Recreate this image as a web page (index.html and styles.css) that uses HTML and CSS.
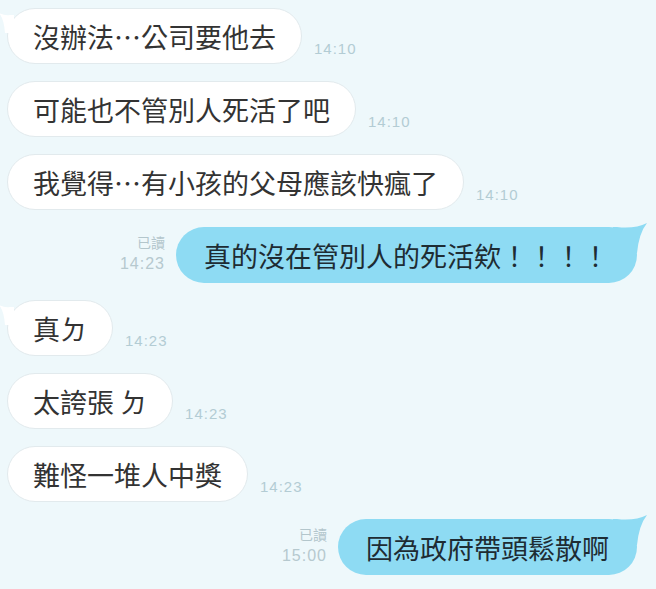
FILE: index.html
```html
<!DOCTYPE html>
<html lang="zh-Hant">
<head>
    <meta charset="UTF-8">
    <meta name="viewport" content="width=device-width, initial-scale=1.0">
    <title>聊天</title>
    <link rel="stylesheet" href="styles.css">
</head>
<body>
    <div class="chat">
        <div class="row left">
            <div class="bubble first">
                <svg class="tail" viewBox="0 0 14 22"><path d="M14,4 L10,4 Q5,5 -1,2 Q4,8 5,22 L14,22 Z" /></svg>
                沒辦法⋯公司要他去
            </div>
            <span class="time">14:10</span>
        </div>
        <div class="row left">
            <div class="bubble">可能也不管別人死活了吧</div>
            <span class="time">14:10</span>
        </div>
        <div class="row left">
            <div class="bubble">我覺得⋯有小孩的父母應該快瘋了</div>
            <span class="time">14:10</span>
        </div>
        <div class="row right">
            <div class="meta">
                <span>已讀</span>
                <span class="time">14:23</span>
            </div>
            <div class="bubble">
                真的沒在管別人的死活欸！！！！
                <svg class="tail" viewBox="0 0 36 30"><path d="M0,4 L4,4 Q22,6 34,0 Q26,10 24,30 L0,30 Z" /></svg>
            </div>
        </div>
        <div class="row left">
            <div class="bubble first">
                <svg class="tail" viewBox="0 0 14 22"><path d="M14,4 L10,4 Q5,5 -1,2 Q4,8 5,22 L14,22 Z" /></svg>
                真ㄉ
            </div>
            <span class="time">14:23</span>
        </div>
        <div class="row left">
            <div class="bubble">太誇張 ㄉ</div>
            <span class="time">14:23</span>
        </div>
        <div class="row left">
            <div class="bubble">難怪一堆人中獎</div>
            <span class="time">14:23</span>
        </div>
        <div class="row right">
            <div class="meta">
                <span>已讀</span>
                <span class="time">15:00</span>
            </div>
            <div class="bubble">
                因為政府帶頭鬆散啊
                <svg class="tail" viewBox="0 0 36 30"><path d="M0,4 L4,4 Q22,6 34,0 Q26,10 24,30 L0,30 Z" /></svg>
            </div>
        </div>
    </div>
</body>
</html>
```

FILE: styles.css
```css
body {
    margin: 0;
    background-color: #eef8fb;
    font-family: "Noto Sans CJK TC", "Noto Sans", sans-serif;
    color: #333;
}
.chat {
    display: flex;
    flex-direction: column;
    gap: 17px;
    padding: 8px 19px 0 7px;
}
.row {
    display: flex;
    align-items: flex-end;
    gap: 12px;
}
.row.right {
    justify-content: flex-end;
    gap: 11px;
}
.bubble {
    position: relative;
    height: 56px;
    box-sizing: border-box;
    padding: 0 25px;
    border-radius: 28px;
    display: flex;
    align-items: center;
    font-size: 27px;
    white-space: nowrap;
}
.left .bubble {
    background-color: #fff;
    border: 1px solid #e2eaed;
}
.right .bubble {
    padding: 0 28px;
    background-color: #8edbf3;
    color: #1e2c33;
}
.tail {
    position: absolute;
    top: 2px;
}
.left .tail {
    left: -8px;
    width: 14px;
    height: 22px;
    fill: #fff;
}
.right .tail {
    top: -4px;
    right: -12px;
    width: 36px;
    height: 30px;
    fill: #8edbf3;
}
.time {
    font-family: "Liberation Sans", Arial, sans-serif;
    font-size: 15px;
    letter-spacing: 1px;
    color: #b3ccd4;
    margin-bottom: 7px;
}
.meta {
    display: flex;
    flex-direction: column;
    align-items: flex-end;
    margin-bottom: 8px;
    font-size: 14px;
    color: #b3c6cc;
    line-height: 22px;
}
.meta .time {
    margin-bottom: 0;
    font-size: 16px;
    color: #b6c9cf;
}
```
